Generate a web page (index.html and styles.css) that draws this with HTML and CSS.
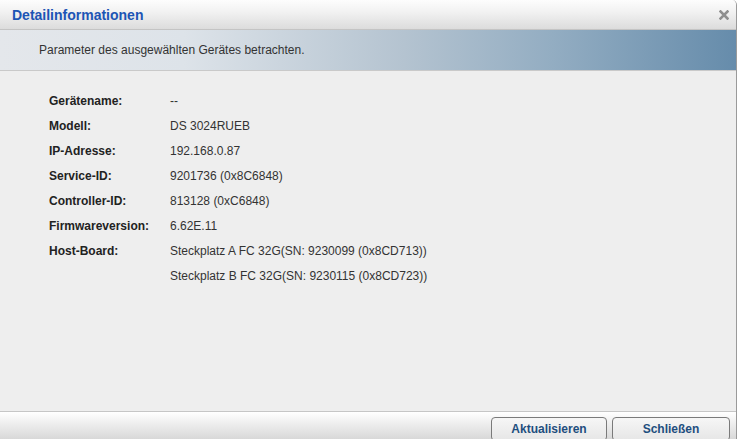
FILE: index.html
```html
<!DOCTYPE html>
<html>
<head>
    <title>Detailinformationen</title>
    <link rel="stylesheet" href="styles.css">
</head>
<body>
    <div class="dialog">
        <div class="titlebar">
            <span class="title">Detailinformationen</span>
            <span class="close">
                <svg width="10" height="10" viewBox="0 0 10 10"><path d="M1.5 1.5 L8.5 8.5 M8.5 1.5 L1.5 8.5" stroke="#8f8f8f" stroke-width="2.6" stroke-linecap="square"/></svg>
            </span>
        </div>

        <div class="banner">Parameter des ausgewählten Gerätes betrachten.</div>

        <div class="content">
            <div class="info">
                <div class="label">Gerätename:</div>
                <div class="value">--</div>
                <div class="label">Modell:</div>
                <div class="value">DS 3024RUEB</div>
                <div class="label">IP-Adresse:</div>
                <div class="value">192.168.0.87</div>
                <div class="label">Service-ID:</div>
                <div class="value">9201736 (0x8C6848)</div>
                <div class="label">Controller-ID:</div>
                <div class="value">813128 (0xC6848)</div>
                <div class="label">Firmwareversion:</div>
                <div class="value">6.62E.11</div>
                <div class="label">Host-Board:</div>
                <div class="value">Steckplatz A FC 32G(SN: 9230099 (0x8CD713))</div>
                <div class="label"></div>
                <div class="value">Steckplatz B FC 32G(SN: 9230115 (0x8CD723))</div>
            </div>
        </div>

        <div class="footer">
            <button class="btn">Aktualisieren</button>
            <button class="btn btn-close">Schließen</button>
        </div>
    </div>
</body>
</html>
```

FILE: styles.css
```css
html, body { margin: 0; padding: 0; background: #fff; }
body { font-family: "Liberation Sans", Arial, sans-serif; font-size: 12px; color: #333; }

.dialog { width: 737px; height: 439px; display: flex; flex-direction: column; background: #eeeeee; border-right: 1px solid #9a9a9a; box-sizing: border-box; overflow: hidden; border-top-right-radius: 5px; }

.titlebar { height: 29px; flex: none; display: flex; align-items: center; justify-content: space-between; padding: 0 7px 0 12px; background: linear-gradient(#fdfdfd, #f2f2f2 40%, #dcdcdc); border-bottom: 1px solid #c4c4c4; }
.title { font-weight: bold; font-size: 14px; color: #1c55b5; padding-top: 1px; }
.close { display: flex; padding-top: 1px; }

.banner { height: 40px; flex: none; display: flex; align-items: center; padding-left: 39px; border-bottom: 1px solid #c9c9c9; background: linear-gradient(to right, #e4e7eb 0%, #dde3e9 25%, #b4c3d0 55%, #93adc2 75%, #668cab 100%); }

.content { flex: 1; min-height: 0; padding: 17px 0 0 49px; }
.info { display: grid; grid-template-columns: 121px auto; grid-auto-rows: 25px; align-items: center; }
.label { font-weight: bold; color: #222; }
.value { color: #333; }

.footer { height: 22px; flex: none; border-top: 1px solid #c6c6c6; background: linear-gradient(#ffffff, #f3f3f3 30%, #d8d8d8); display: flex; justify-content: flex-end; align-items: flex-start; gap: 5px; padding: 5px 6px 0 0; }
.btn { flex: none; width: 116px; height: 24px; font-family: "Liberation Sans", Arial, sans-serif; font-weight: bold; font-size: 12px; color: #1e4e7e; background: linear-gradient(#f6f6f6, #e6e6e6); border: 1px solid #7a7a7a; border-radius: 4px; padding: 0 0 1px 0; cursor: pointer; }
.btn-close { width: 118px; }
```
